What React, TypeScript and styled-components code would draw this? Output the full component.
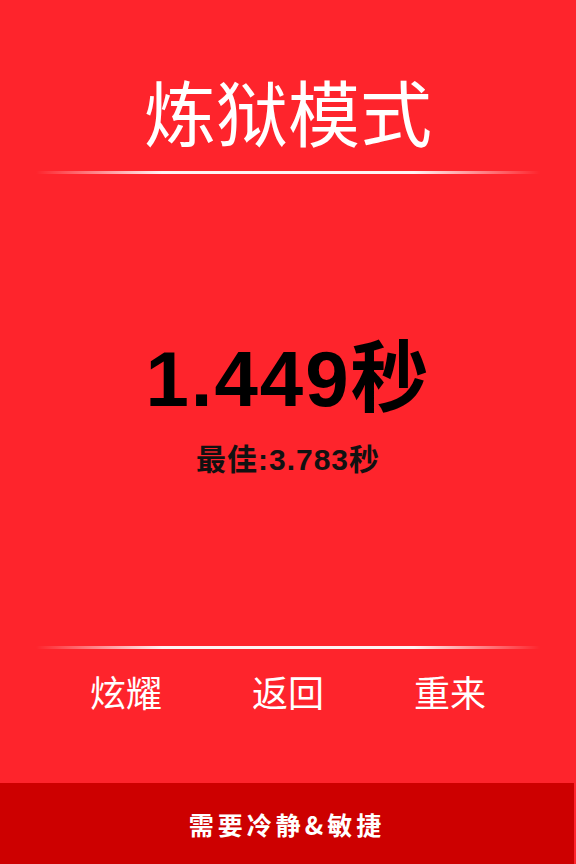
import React from "react";
import styled, { createGlobalStyle } from "styled-components";

const GlobalStyle = createGlobalStyle`
	html, body {
		margin: 0;
		padding: 0;
		background: #fe242c;
	}
	* {
		box-sizing: border-box;
	}
`;

const Page = styled.div`
	width: 576px;
	height: 864px;
	display: flex;
	flex-direction: column;
	background: #fe242c;
	font-family: "Liberation Sans", "Noto Sans CJK SC", sans-serif;
	overflow: hidden;
`;

const Title = styled.h1`
	margin: 74px 0 0;
	height: 72px;
	line-height: 72px;
	font-size: 72px;
	font-weight: 400;
	color: white;
	text-align: center;
	font-family: "Noto Sans CJK SC", sans-serif;
`;

const Divider = styled.div<{ $top: number }>`
	margin: ${(p) => p.$top}px 36px 0;
	height: 3px;
	background: linear-gradient(
		to right,
		rgba(255, 255, 255, 0),
		rgba(255, 255, 255, 0.95) 25%,
		rgba(255, 255, 255, 0.95) 75%,
		rgba(255, 255, 255, 0)
	);
`;

const Score = styled.div`
	margin-top: 165px;
	height: 80px;
	line-height: 80px;
	font-size: 78px;
	font-weight: 700;
	letter-spacing: 2px;
	color: #000;
	text-align: center;
`;

const Best = styled.div`
	margin-top: 26px;
	height: 30px;
	line-height: 30px;
	font-size: 30px;
	font-weight: 700;
	letter-spacing: 1px;
	color: #111;
	text-align: center;
`;

const Spacer = styled.div`
	flex: 1;
`;

const Actions = styled.div`
	display: flex;
	justify-content: space-between;
	padding: 22px 90px 0;
	height: 134px;
`;

const ActionButton = styled.button`
	border: none;
	background: none;
	padding: 0;
	height: 40px;
	line-height: 40px;
	font-size: 36px;
	color: white;
	font-family: "Noto Sans CJK SC", sans-serif;
	cursor: pointer;
`;

const Footer = styled.div`
	height: 81px;
	margin-right: 2px;
	background: #cd0000;
	display: flex;
	align-items: center;
	justify-content: center;
	color: white;
	font-size: 25px;
	font-weight: 700;
	letter-spacing: 4px;
	font-family: "Noto Sans CJK SC", sans-serif;
`;

export default function App() {
	return (
		<>
			<GlobalStyle />
			<Page>
				<Title>炼狱模式</Title>
				<Divider $top={25} />
				<Score>1.449秒</Score>
				<Best>最佳:3.783秒</Best>
				<Spacer />
				<Divider $top={0} />
				<Actions>
					<ActionButton>炫耀</ActionButton>
					<ActionButton>返回</ActionButton>
					<ActionButton>重来</ActionButton>
				</Actions>
				<Footer>需要冷静&amp;敏捷</Footer>
			</Page>
		</>
	);
}
